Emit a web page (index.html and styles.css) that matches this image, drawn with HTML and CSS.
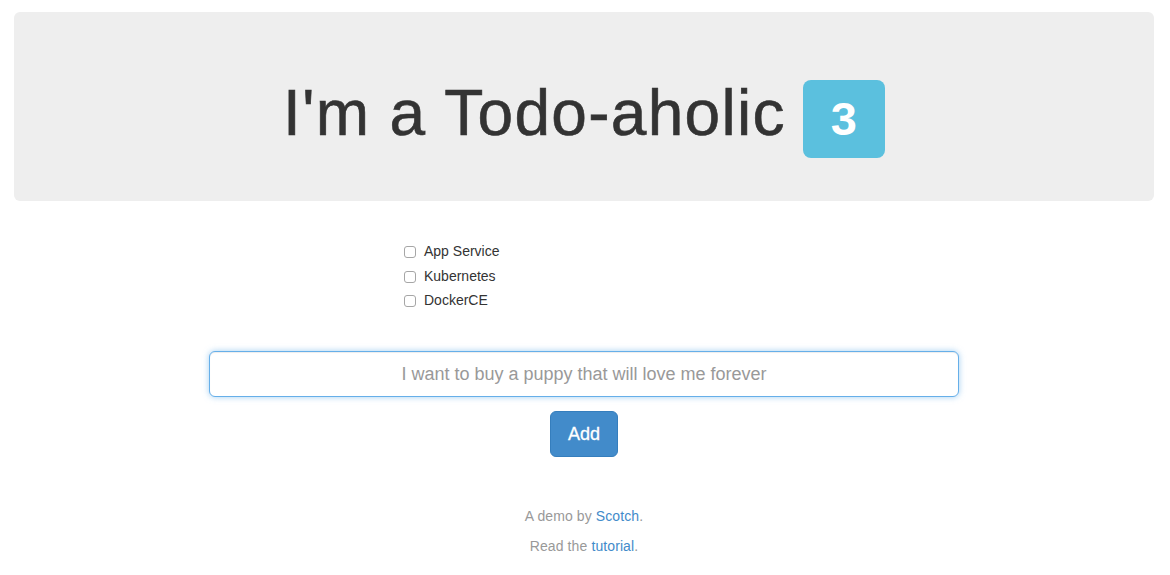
FILE: index.html
```html
<!DOCTYPE html>
<html>
<head>
<meta charset="utf-8">
<title>Todo-aholic</title>
<link rel="stylesheet" href="styles.css">
</head>
<body>
<div class="jumbotron">
  <h1>I'm a Todo-aholic <span class="label">3</span></h1>
</div>
<div class="todos">
  <label class="todo"><input type="checkbox"><span>App Service</span></label>
  <label class="todo"><input type="checkbox"><span>Kubernetes</span></label>
  <label class="todo"><input type="checkbox"><span>DockerCE</span></label>
</div>
<form class="add-form">
  <input class="todo-input" type="text" placeholder="I want to buy a puppy that will love me forever">
  <button class="btn-add" type="button">Add</button>
</form>
<div class="footer">
  <p>A demo by <a href="#">Scotch</a>.</p>
  <p>Read the <a href="#">tutorial</a>.</p>
</div>
</body>
</html>
```

FILE: styles.css
```css
* { box-sizing: border-box; }
html, body { margin: 0; padding: 0; }
body {
  font-family: "Liberation Sans", Arial, Helvetica, sans-serif;
  font-size: 14px;
  line-height: 1.428;
  color: #333;
  background: #fff;
}
.jumbotron {
  margin: 12px 16px 0 14px;
  height: 189px;
  background: #eeeeee;
  border-radius: 6px;
  padding-top: 67px;
  text-align: center;
}
.jumbotron h1 {
  margin: 0;
  font-size: 64px;
  line-height: 69px;
  font-weight: normal;
  color: #333;
  letter-spacing: 1.3px;
  -webkit-text-stroke: 0.6px #333;
}
.label {
  display: inline-block;
  background: #5bc0de;
  color: #fff;
  font-weight: bold;
  font-size: 47px;
  line-height: 1;
  padding: 15px 0 0;
  width: 82px;
  height: 78px;
  text-align: center;
  border-radius: 8px;
  vertical-align: baseline;
  letter-spacing: 0;
  -webkit-text-stroke: 0;
  margin-left: -2px;
}
.todos {
  margin-top: 41px;
  padding-left: 404px;
  display: flex;
  flex-direction: column;
  gap: 4.5px;
}
.todo {
  display: flex;
  align-items: center;
  height: 20px;
  gap: 8px;
  cursor: pointer;
}
.todo input {
  appearance: none;
  -webkit-appearance: none;
  margin: 0;
  width: 12px;
  height: 12px;
  border: 1px solid #a6a6a6;
  border-radius: 3px;
  background: #fff;
}
.add-form {
  margin-top: 40px;
  display: flex;
  flex-direction: column;
  align-items: center;
  gap: 14px;
}
.todo-input {
  width: 750px;
  height: 46px;
  margin-left: -2px;
  padding: 10px 16px;
  font-family: inherit;
  font-size: 18px;
  text-align: center;
  color: #555;
  border: 1px solid #66afe9;
  border-radius: 6px;
  outline: 0;
  box-shadow: inset 0 1px 1px rgba(0,0,0,.075), 0 0 6px rgba(102,175,233,.6);
}
.todo-input::placeholder { color: #999; }
.btn-add {
  height: 46px;
  padding: 0 17px;
  margin-left: -2px;
  font-family: inherit;
  font-size: 18px;
  color: #fff;
  background: #428bca;
  border: 1px solid #357ebd;
  border-radius: 6px;
  cursor: pointer;
  -webkit-text-stroke: 0.3px #fff;
}
.footer {
  margin-top: 49px;
  text-align: center;
  color: #999;
  margin-left: -2px;
}
.footer p { margin: 0 0 10px 0; line-height: 20px; letter-spacing: 0.1px; }
.footer a { color: #428bca; text-decoration: none; }
```
